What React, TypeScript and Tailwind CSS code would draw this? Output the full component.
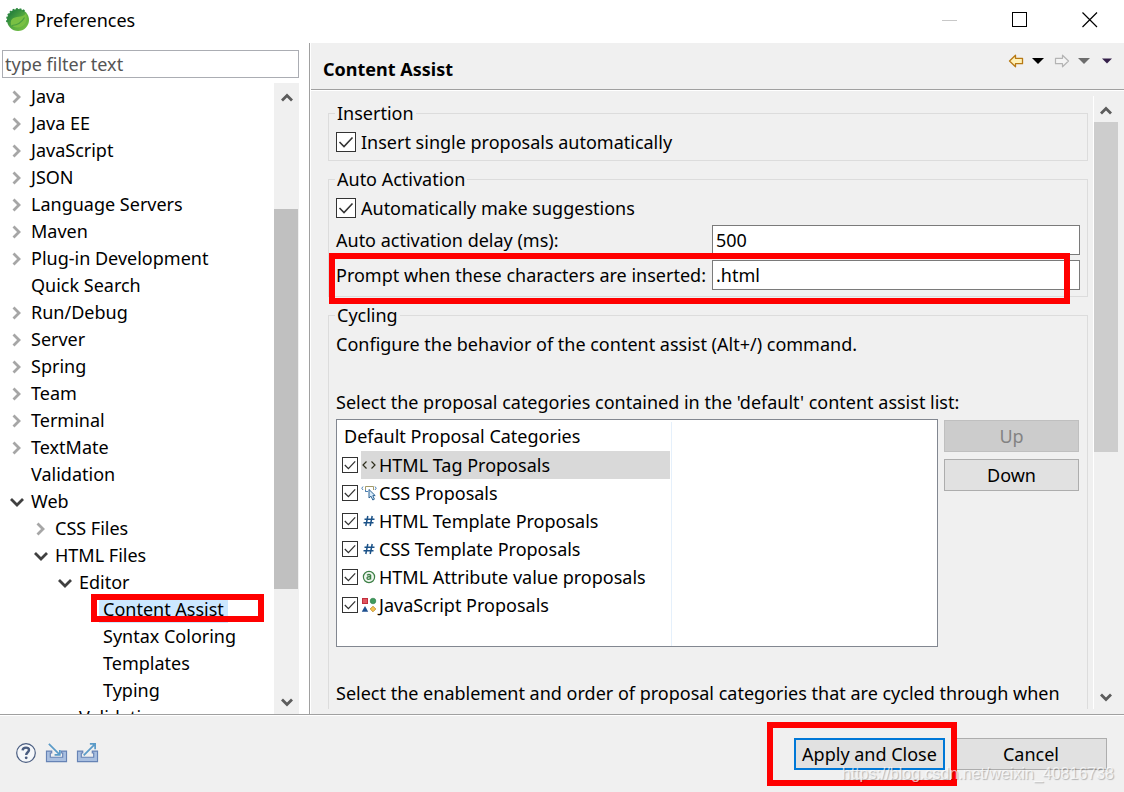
import { useState } from 'react';
import type { ReactNode } from 'react';

interface TreeItem {
  label: string;
  level: number;
  state: 'open' | 'closed' | 'leaf';
  selected?: boolean;
}

const treeItems: TreeItem[] = [
  { label: 'Java', level: 0, state: 'closed' },
  { label: 'Java EE', level: 0, state: 'closed' },
  { label: 'JavaScript', level: 0, state: 'closed' },
  { label: 'JSON', level: 0, state: 'closed' },
  { label: 'Language Servers', level: 0, state: 'closed' },
  { label: 'Maven', level: 0, state: 'closed' },
  { label: 'Plug-in Development', level: 0, state: 'closed' },
  { label: 'Quick Search', level: 0, state: 'leaf' },
  { label: 'Run/Debug', level: 0, state: 'closed' },
  { label: 'Server', level: 0, state: 'closed' },
  { label: 'Spring', level: 0, state: 'closed' },
  { label: 'Team', level: 0, state: 'closed' },
  { label: 'Terminal', level: 0, state: 'closed' },
  { label: 'TextMate', level: 0, state: 'closed' },
  { label: 'Validation', level: 0, state: 'leaf' },
  { label: 'Web', level: 0, state: 'open' },
  { label: 'CSS Files', level: 1, state: 'closed' },
  { label: 'HTML Files', level: 1, state: 'open' },
  { label: 'Editor', level: 2, state: 'open' },
  { label: 'Content Assist', level: 3, state: 'leaf', selected: true },
  { label: 'Syntax Coloring', level: 3, state: 'leaf' },
  { label: 'Templates', level: 3, state: 'leaf' },
  { label: 'Typing', level: 3, state: 'leaf' },
  { label: 'Validation', level: 2, state: 'leaf' },
];

const indents = ['pl-2', 'pl-8', 'pl-14', 'pl-20'];

const HashIcon = () => (
  <svg width="16" height="16" viewBox="0 0 16 16" fill="none" stroke="#1b5288" strokeWidth="1.5">
    <path d="M6.8 3L4.8 13M11.2 3L9.2 13M3.5 6.2H13.5M2.5 9.8H12.5" />
  </svg>
);

const categories: { label: string; icon: ReactNode }[] = [
  {
    label: 'HTML Tag Proposals',
    icon: (
      <svg width="16" height="16" viewBox="0 0 16 16" fill="none" stroke="#2e2e1c" strokeWidth="1.2">
        <path d="M5.5 4.5L2 8L5.5 11.5M10.5 4.5L14 8L10.5 11.5" />
      </svg>
    ),
  },
  {
    label: 'CSS Proposals',
    icon: (
      <svg width="16" height="16" viewBox="0 0 16 16" fill="none">
        <path d="M2 1.5L0.8 3.2L2 5M14 1.5L15.2 3.2L14 5" stroke="#4a7fb5" />
        <path d="M7 6.5H4.5V1.5H12.5V5" stroke="#a39a68" />
        <path d="M4.5 5V6.5H7" stroke="#4a7fb5" />
        <path d="M8 4.5V13L10 11.2L11.8 15L13.4 14.2L11.8 10.6H14.2Z" fill="#d8ebfa" stroke="#2c6394" />
      </svg>
    ),
  },
  { label: 'HTML Template Proposals', icon: <HashIcon /> },
  { label: 'CSS Template Proposals', icon: <HashIcon /> },
  {
    label: 'HTML Attribute value proposals',
    icon: (
      <svg width="16" height="16" viewBox="0 0 16 16" fill="none" stroke="#3c7f45">
        <circle cx="8" cy="8" r="5.6" fill="#eef6ee" strokeWidth="1.2" />
        <path d="M6 6.2Q8 4.8 9.6 6.2V10.6M9.6 7.8Q6 7.4 6 9.2Q6.4 11.2 9.6 9.6" strokeWidth="1.3" />
      </svg>
    ),
  },
  {
    label: 'JavaScript Proposals',
    icon: (
      <svg width="16" height="16" viewBox="0 0 16 16">
        <rect x="1.5" y="1.5" width="5" height="5" fill="#e0565f" stroke="#c22f3d" />
        <circle cx="12" cy="4" r="2.8" fill="#3f9a5c" stroke="#2a7a45" strokeWidth="0.6" />
        <path d="M4 9L7.2 14.8H0.8Z" fill="#1d4f8f" />
        <path d="M12 9.2L14.8 12L12 14.8L9.2 12Z" fill="#f5c451" stroke="#b9821e" strokeWidth="0.8" />
      </svg>
    ),
  },
];

const Check = ({ id, label, small }: { id: string; label?: string; small?: boolean }) => {
  const [checked, setChecked] = useState(true);
  return (
    <span className={small ? 'grid size-4 shrink-0' : 'grid size-5 shrink-0'}>
      <input
        type="checkbox"
        id={id}
        aria-label={label}
        className="col-start-1 row-start-1 size-full appearance-none border border-[#333] bg-white"
        checked={checked}
        onChange={(e) => setChecked(e.target.checked)}
      />
      {checked && (
        <svg
          className="pointer-events-none col-start-1 row-start-1 size-full"
          viewBox="0 0 20 20"
          fill="none"
          stroke="#333"
          strokeWidth="1.6"
        >
          <path d="M3.5 10L8 14.5L16.5 5.5" />
        </svg>
      )}
    </span>
  );
};

const ScrollArrow = ({ up }: { up?: boolean }) => (
  <button type="button" aria-label={up ? 'Scroll up' : 'Scroll down'} className="grid h-6 w-full shrink-0 place-items-center">
    <svg width="12" height="9" viewBox="0 0 12 9" fill="none" stroke="#5c5c5c" strokeWidth="2.8">
      <path d={up ? 'M1 7.5L6 2.5L11 7.5' : 'M1 1.5L6 6.5L11 1.5'} />
    </svg>
  </button>
);

const Group = ({ title, className, children }: { title: string; className: string; children: ReactNode }) => (
  <fieldset className={`min-w-0 border border-[#dcdcdc] px-[7px] ${className}`}>
    <legend className="-ml-px h-6 px-[2px] leading-6">{title}</legend>
    {children}
  </fieldset>
);

const TreeRow = ({ item }: { item: TreeItem }) => (
  <li className={`flex h-[27px] items-center leading-[27px] ${indents[item.level]}`}>
    <span className="grid w-[19px] shrink-0 place-items-start">
      {item.state === 'closed' && (
        <svg className="ml-1" width="10" height="14" viewBox="0 0 10 14" fill="none" stroke="#a6a6a6" strokeWidth="2.8">
          <path d="M1.5 1.5L7 7L1.5 12.5" />
        </svg>
      )}
      {item.state === 'open' && (
        <svg className="ml-[2px]" width="14" height="10" viewBox="0 0 14 10" fill="none" stroke="#404040" strokeWidth="2.8">
          <path d="M1 2L7 8L13 2" />
        </svg>
      )}
    </span>
    <span className={item.selected ? 'relative bg-[#cce8ff] px-1' : 'px-1'}>
      {item.label}
      {item.selected && (
        <span className="absolute -top-[2px] -left-2 h-7 w-[173px] border-6 border-[#ff0000]" />
      )}
    </span>
  </li>
);

const Sidebar = () => {
  const [filter, setFilter] = useState('');
  return (
    <aside className="flex w-[310px] shrink-0 flex-col border-r border-[#a0a0a0] bg-white pt-[7px] pr-[10px]">
      <input
        type="text"
        aria-label="Filter"
        placeholder="type filter text"
        className="ml-[2px] h-7 shrink-0 border border-[#abadb3] px-[2px] placeholder:text-[#555] focus:outline-none"
        value={filter}
        onChange={(e) => setFilter(e.target.value)}
      />
      <div className="mt-[5px] flex min-h-0 flex-1">
        <ul className="min-w-0 flex-1 overflow-hidden whitespace-nowrap">
          {treeItems.map((item, i) => (
            <TreeRow key={i} item={item} />
          ))}
        </ul>
        <div className="flex w-[25px] shrink-0 flex-col bg-[#f0f0f0] pt-[2px]">
          <ScrollArrow up />
          <div className="mr-px flex flex-1 flex-col">
            <div className="grow-[100]" />
            <div className="grow-[378] bg-[#c0c0c0]" />
            <div className="grow-[101]" />
          </div>
          <ScrollArrow />
        </div>
      </div>
    </aside>
  );
};

const Caret = ({ color, small }: { color: string; small?: boolean }) => (
  <svg width={small ? 10 : 12} height="6" viewBox="0 0 12 6">
    <path d="M0 0H12L6 6Z" fill={color} />
  </svg>
);

const Toolbar = () => (
  <div className="flex h-9 items-center pr-3">
    <button type="button" aria-label="Back" className="mr-2">
      <svg width="16" height="14" viewBox="0 0 16 14" fill="#fff1b8" stroke="#b87a14" strokeWidth="1.3">
        <path d="M1.5 7L7.5 1.2V4.3H14.5V9.7H7.5V12.8Z" strokeLinejoin="round" />
      </svg>
    </button>
    <button type="button" aria-label="Back history" className="mr-[10px]">
      <Caret color="#000000" />
    </button>
    <button type="button" aria-label="Forward" className="mr-2">
      <svg width="16" height="14" viewBox="0 0 16 14" fill="#f4f4f4" stroke="#b4b4b4" strokeWidth="1.2">
        <path d="M14.5 7L8.5 1.2V4.3H1.5V9.7H8.5V12.8Z" strokeLinejoin="round" />
      </svg>
    </button>
    <button type="button" aria-label="Forward history" className="mr-3">
      <Caret color="#6d6d6d" />
    </button>
    <button type="button" aria-label="View menu">
      <Caret color="#35204a" small />
    </button>
  </div>
);

const ContentAssistPage = () => {
  const [delay, setDelay] = useState('500');
  const [chars, setChars] = useState('.html');

  return (
    <div className="min-w-0 flex-1 overflow-hidden pt-[5px] pr-[5px] pl-[17px]">
      <Group title="Insertion" className="pt-[3px] pb-1">
        <div className="flex h-7 items-center gap-[5px]">
          <Check id="insert-single" />
          <label htmlFor="insert-single">Insert single proposals automatically</label>
        </div>
      </Group>

      <Group title="Auto Activation" className="mt-[6px] pt-[3px] pb-[6px]">
        <div className="flex h-7 items-center gap-[5px]">
          <Check id="auto-suggest" />
          <label htmlFor="auto-suggest">Automatically make suggestions</label>
        </div>
        <div className="mt-[3px] grid grid-cols-[376px_1fr] items-center">
          <label htmlFor="delay">Auto activation delay (ms):</label>
          <input
            type="text"
            id="delay"
            className="h-[30px] w-full border border-[#7a7a7a] bg-white px-[3px] focus:outline-none"
            value={delay}
            onChange={(e) => setDelay(e.target.value)}
          />
        </div>
        <div className="relative mt-[5px] grid grid-cols-[376px_1fr] items-center">
          <label htmlFor="chars" className="whitespace-nowrap">Prompt when these characters are inserted:</label>
          <input
            type="text"
            id="chars"
            className="h-[30px] w-full border border-[#7a7a7a] bg-white px-[3px] focus:outline-none"
            value={chars}
            onChange={(e) => setChars(e.target.value)}
          />
          <span className="pointer-events-none absolute -top-[7px] right-[10px] -bottom-[14px] -left-[7px] border-6 border-[#ff0000]" />
        </div>
      </Group>

      <Group title="Cycling" className="mt-[6px] pt-1 pb-10 leading-[27px]">
        <p>Configure the behavior of the content assist (Alt+/) command.</p>
        <p className="mt-[31px]">Select the proposal categories contained in the 'default' content assist list:</p>
        <div className="mt-[3px] flex gap-[6px]">
          <div className="min-w-0 flex-1 border border-[#828790] bg-white pt-[2px]">
            <table className="w-full border-collapse">
              <thead>
                <tr>
                  <th className="h-[29px] w-[334px] border-r border-[#e5f0fb] p-0 pl-[7px] text-left font-normal">
                    Default Proposal Categories
                  </th>
                  <th className="p-0" />
                </tr>
              </thead>
              <tbody>
                {categories.map((category, i) => (
                  <tr key={category.label}>
                    <td className="h-7 border-r border-[#e5f0fb] p-0 pl-[5px]">
                      <div className="flex items-center gap-[3px]">
                        <Check id={`category-${i}`} small />
                        <label
                          htmlFor={`category-${i}`}
                          className={i === 0 ? 'mr-px flex h-7 flex-1 items-center gap-[2px] bg-[#d9d9d9]' : 'flex h-7 flex-1 items-center gap-[2px]'}
                        >
                          {category.icon}
                          {category.label}
                        </label>
                      </div>
                    </td>
                    <td className="p-0" />
                  </tr>
                ))}
                <tr>
                  <td className="h-[27px] border-r border-[#e5f0fb] p-0" />
                  <td className="p-0" />
                </tr>
              </tbody>
            </table>
          </div>
          <div className="flex w-[136px] shrink-0 flex-col gap-[7px] pt-px pr-px">
            <button type="button" disabled className="h-8 border border-[#bfbfbf] bg-[#cccccc] text-[#838383]">
              Up
            </button>
            <button type="button" className="h-8 border border-[#adadad] bg-[#e1e1e1]">
              Down
            </button>
          </div>
        </div>
        <p className="mt-[33px] whitespace-nowrap">
          Select the enablement and order of proposal categories that are cycled through when
        </p>
      </Group>
    </div>
  );
};

const TitleBar = () => (
  <header className="flex h-[43px] shrink-0 items-center bg-white pr-[26px] pb-[3px] pl-[6px]">
    <svg width="24" height="24" viewBox="0 0 24 24">
      <defs>
        <linearGradient id="leaf" x1="0" y1="0" x2="1" y2="1">
          <stop offset="0.1" stopColor="#1f7a3c" />
          <stop offset="0.6" stopColor="#5cb040" />
          <stop offset="1" stopColor="#7cc243" />
        </linearGradient>
      </defs>
      <circle cx="12" cy="12" r="11" fill="url(#leaf)" />
      <path d="M1.2 14A11 11 0 0 1 19 3.6" fill="none" stroke="#2f8a41" strokeWidth="2" strokeDasharray="1.8 1.6" />
      <path d="M5 17C3.5 9 10 9.5 14.5 8.6C17.5 8 19 6.6 20 5.2C22.5 12 19 20 11 19.6C8.5 19.5 6.5 18.5 5 17Z" fill="#79c043" />
      <path d="M6 17.5C11 17 16 14 18.5 9.5" fill="none" stroke="#4a9f41" strokeWidth="1.2" />
    </svg>
    <h1 className="ml-[5px] flex-1">Preferences</h1>
    <div className="flex gap-[54px]">
      <button type="button" aria-label="Minimize">
        <svg width="16" height="16" viewBox="0 0 16 16" stroke="#c8c8c8">
          <path d="M0 8.5H15" />
        </svg>
      </button>
      <button type="button" aria-label="Maximize">
        <svg width="16" height="16" viewBox="0 0 16 16" fill="none" stroke="#000">
          <rect x="0.5" y="0.5" width="14" height="14" />
        </svg>
      </button>
      <button type="button" aria-label="Close">
        <svg width="16" height="16" viewBox="0 0 16 16" stroke="#000" strokeWidth="1.2">
          <path d="M0.5 0.5L15 15M15 0.5L0.5 15" />
        </svg>
      </button>
    </div>
  </header>
);

const TrayPath = () => (
  <path d="M1.5 9.5H7V11.5H5.5V16H18.5V11.5H17V9.5H22.5V20.5H1.5Z" fill="#a9bfe0" stroke="#6683b5" strokeWidth="1.2" />
);

const Footer = () => (
  <footer className="relative flex h-[78px] shrink-0 items-center border-t border-[#a0a0a0] pr-[17px] pl-4 shadow-[inset_0_1px_0_#fff]">
    <div className="flex flex-1 items-center gap-2 pb-[2px]">
      <button type="button" aria-label="Help" className="mr-px">
        <svg width="20" height="20" viewBox="0 0 20 20" fill="none">
          <circle cx="10" cy="10" r="9.3" fill="#f5f7fa" stroke="#4a5d80" strokeWidth="1.2" />
          <path d="M6.6 7.4C6.8 3.6 13.4 3.8 13 7.2C12.8 9.4 10.2 9.2 10.2 12" stroke="#4a5d80" strokeWidth="2.4" />
          <circle cx="10.2" cy="14.8" r="1.4" fill="#4a5d80" />
        </svg>
      </button>
      <button type="button" aria-label="Import">
        <svg width="23" height="21" viewBox="0 0 24 22" fill="none">
          <TrayPath />
          <path d="M4 2L15 13M15.5 8.5V13.5H10" stroke="#5b9bc8" strokeWidth="1.8" />
        </svg>
      </button>
      <button type="button" aria-label="Export">
        <svg width="23" height="21" viewBox="0 0 24 22" fill="none">
          <TrayPath />
          <path d="M8 14L19 3M14.5 2H20V7.5" stroke="#5b9bc8" strokeWidth="1.8" />
        </svg>
      </button>
    </div>
    <div className="flex gap-[10px]">
      <div className="relative">
        <button type="button" className="h-8 w-[151px] border-2 border-[#0078d7] bg-[#e1e1e1] whitespace-nowrap">
          Apply and Close
        </button>
        <span className="pointer-events-none absolute -top-4 -right-3 -bottom-4 -left-[27px] z-10 border-6 border-[#ff0000]" />
      </div>
      <button type="button" className="h-8 w-[152px] border border-[#adadad] bg-[#e1e1e1]">
        Cancel
      </button>
    </div>
    <span className="pointer-events-none absolute right-[10px] bottom-2 z-20 font-['Liberation_Sans',sans-serif] text-base leading-5 text-white/70 [text-shadow:1px_1px_1px_rgba(0,0,0,0.25)]">
      https://blog.csdn.net/weixin_40816738
    </span>
  </footer>
);

const App = () => {
  return (
    <div className="flex h-screen flex-col overflow-hidden bg-[#f0f0f0] font-['Noto_Sans','Open_Sans',sans-serif] text-[18px] leading-6 text-black">
      <TitleBar />
      <div className="flex min-h-0 flex-1">
        <Sidebar />
        <main className="flex min-w-0 flex-1 flex-col border-l border-white">
          <div className="flex h-[47px] shrink-0 justify-between border-b border-[#a0a0a0] pl-3">
            <h2 className="self-center pt-[6px] font-bold">Content Assist</h2>
            <Toolbar />
          </div>
          <div className="flex min-h-0 flex-1 border-t border-white pt-[5px] pb-[5px]">
            <ContentAssistPage />
            <div className="mr-[6px] flex w-[25px] shrink-0 flex-col border-l border-white pt-[2px]">
              <ScrollArrow up />
              <div className="flex flex-1 flex-col">
                <div className="grow-[330] bg-[#cdcdcd]" />
                <div className="grow-[233]" />
              </div>
              <ScrollArrow />
            </div>
          </div>
        </main>
      </div>
      <Footer />
    </div>
  );
};

export default App;
